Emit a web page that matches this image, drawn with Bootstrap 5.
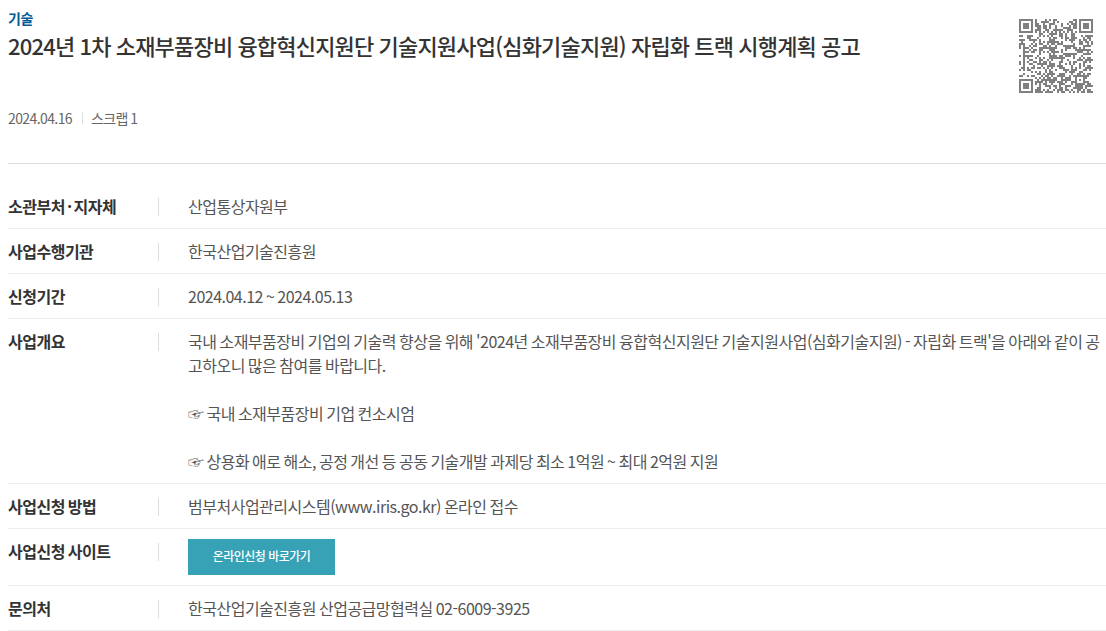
<!DOCTYPE html>
<html lang="ko">
<head>
    <meta charset="UTF-8">
    <title>사업공고</title>
    <link href="https://cdn.jsdelivr.net/npm/bootstrap@5.3.3/dist/css/bootstrap.min.css" rel="stylesheet">
    <style>
        body { font-family: "Noto Sans CJK KR", sans-serif; font-size: 16px; line-height: 24px; letter-spacing: -0.5px; word-spacing: -1px; color: #555; }
        .category { font-size: 14px; line-height: 20px; color: #005b94; }
        .notice-title { font-size: 22px; line-height: 32px; font-weight: 500; letter-spacing: -0.8px; word-spacing: -0.3px; color: #333; margin-top: 1px; }
        .meta { font-size: 14px; line-height: 20px; color: #666; margin-top: 47px; letter-spacing: -0.6px; }
        .meta-bar { width: 1px; height: 12px; background: #ddd; margin: 0 8px 0 10px; }
        .notice-head { height: 164px; border-bottom: 1px solid #ddd; margin-bottom: 20px; }
        .qr { width: 74px; height: 74px; margin: 19px 13px 0 0; }
        .info-row { padding: 10px 0; border-bottom: 1px solid #eee; }
        .info-label { width: 150px; color: #333; }
        .info-label .dot { margin: 0 2px; }
        .info-bar { width: 1px; height: 18px; margin: 4px 29px 0 0; background: #ddd; }
        .info-text { word-break: break-all; }
        .btn-apply { width: 147px; height: 36px; background: #37a1b6; color: #fff; font-size: 12px; font-weight: 500; word-spacing: 0; padding: 0 0 2px; }
        .btn-apply:hover { background: #2f8fa2; color: #fff; }
    </style>
</head>
<body>
<main class="ps-2">
    <header class="notice-head d-flex justify-content-between">
        <div>
            <div class="category fw-bold mt-2">기술</div>
            <h1 class="notice-title mb-0">2024년 1차 소재부품장비 융합혁신지원단 기술지원사업(심화기술지원) 자립화 트랙 시행계획 공고</h1>
            <div class="meta d-flex align-items-center">
                <span>2024.04.16</span><span class="meta-bar"></span><span>스크랩 1</span>
            </div>
        </div>
        <svg class="qr flex-shrink-0" viewBox="0 0 37 37" shape-rendering="crispEdges"><path id="qrPath" fill="#808080"/></svg>
    </header>

    <div class="info-row d-flex">
        <div class="info-label flex-shrink-0 fw-bold">소관부처<span class="dot">·</span>지자체</div>
        <div class="info-bar flex-shrink-0"></div>
        <div class="info-text">산업통상자원부</div>
    </div>
    <div class="info-row d-flex">
        <div class="info-label flex-shrink-0 fw-bold">사업수행기관</div>
        <div class="info-bar flex-shrink-0"></div>
        <div class="info-text">한국산업기술진흥원</div>
    </div>
    <div class="info-row d-flex">
        <div class="info-label flex-shrink-0 fw-bold">신청기간</div>
        <div class="info-bar flex-shrink-0"></div>
        <div class="info-text">2024.04.12 ~ 2024.05.13</div>
    </div>
    <div class="info-row d-flex">
        <div class="info-label flex-shrink-0 fw-bold">사업개요</div>
        <div class="info-bar flex-shrink-0"></div>
        <div class="info-text">국내 소재부품장비 기업의 기술력 향상을 위해 '2024년 소재부품장비 융합혁신지원단 기술지원사업(심화기술지원) - 자립화 트랙'을 아래와 같이 공고하오니 많은 참여를 바랍니다.<br><br>☞ 국내 소재부품장비 기업 컨소시엄<br><br>☞ 상용화 애로 해소, 공정 개선 등 공동 기술개발 과제당 최소 1억원 ~ 최대 2억원 지원</div>
    </div>
    <div class="info-row d-flex">
        <div class="info-label flex-shrink-0 fw-bold">사업신청 방법</div>
        <div class="info-bar flex-shrink-0"></div>
        <div class="info-text">범부처사업관리시스템(www.iris.go.kr) 온라인 접수</div>
    </div>
    <div class="info-row d-flex">
        <div class="info-label flex-shrink-0 fw-bold">사업신청 사이트</div>
        <div class="info-bar flex-shrink-0"></div>
        <a href="#" class="btn btn-apply rounded-0 border-0 d-flex align-items-center justify-content-center">온라인신청 바로가기</a>
    </div>
    <div class="info-row d-flex">
        <div class="info-label flex-shrink-0 fw-bold">문의처</div>
        <div class="info-bar flex-shrink-0"></div>
        <div class="info-text">한국산업기술진흥원 산업공급망협력실 02-6009-3925</div>
    </div>
</main>

<script src="https://cdn.jsdelivr.net/npm/bootstrap@5.3.3/dist/js/bootstrap.bundle.min.js"></script>
<script>
    // QR version 5, error correction L: 108 data + 26 ec codewords in one block
    const SIZE = 37;

    function gfMul(a, b) {
        let r = 0;
        for (let i = 7; i >= 0; i--) {
            r = (r << 1) ^ ((r >>> 7) * 0x11d);
            r ^= ((b >>> i) & 1) * a;
        }
        return r;
    }

    function codewords(text) {
        let bits = '0100' + text.length.toString(2).padStart(8, '0');
        for (const c of text) bits += c.charCodeAt(0).toString(2).padStart(8, '0');
        bits += '0000';
        const data = bits.match(/.{8}/g).map(b => parseInt(b, 2));
        for (let pad = 0xec; data.length < 108; pad ^= 0xec ^ 0x11) data.push(pad);

        const gen = new Array(26).fill(0);
        gen[25] = 1;
        let root = 1;
        for (let i = 0; i < 26; i++) {
            for (let j = 0; j < 26; j++) {
                gen[j] = gfMul(gen[j], root) ^ (j < 25 ? gen[j + 1] : 0);
            }
            root = gfMul(root, 2);
        }
        const ec = new Array(26).fill(0);
        data.forEach(b => {
            const f = b ^ ec.shift();
            ec.push(0);
            gen.forEach((g, i) => ec[i] ^= gfMul(g, f));
        });
        return data.concat(ec);
    }

    function qrPath(text) {
        const MASK = 4;
        const masked = (x, y) => (Math.floor(x / 3) + Math.floor(y / 2)) % 2 === 0;
        const m = Array.from({length: SIZE}, () => new Array(SIZE).fill(null));
        const set = (x, y, v) => { if (x >= 0 && y >= 0 && x < SIZE && y < SIZE) m[y][x] = v ? 1 : 0; };

        // timing, finders, alignment
        for (let i = 0; i < SIZE; i++) {
            set(6, i, i % 2 === 0);
            set(i, 6, i % 2 === 0);
        }
        [[3, 3], [SIZE - 4, 3], [3, SIZE - 4]].forEach(([cx, cy]) => {
            for (let dy = -4; dy <= 4; dy++) for (let dx = -4; dx <= 4; dx++) {
                const d = Math.max(Math.abs(dx), Math.abs(dy));
                set(cx + dx, cy + dy, d !== 2 && d !== 4);
            }
        });
        for (let dy = -2; dy <= 2; dy++) for (let dx = -2; dx <= 2; dx++) {
            set(30 + dx, 30 + dy, Math.max(Math.abs(dx), Math.abs(dy)) !== 1);
        }

        // format bits
        const fmt = 8 | MASK;
        let rem = fmt;
        for (let i = 0; i < 10; i++) rem = (rem << 1) ^ ((rem >>> 9) * 0x537);
        const f = ((fmt << 10) | rem) ^ 0x5412;
        const bit = i => (f >>> i) & 1;
        for (let i = 0; i < 6; i++) set(8, i, bit(i));
        set(8, 7, bit(6));
        set(8, 8, bit(7));
        set(7, 8, bit(8));
        for (let i = 9; i < 15; i++) set(14 - i, 8, bit(i));
        for (let i = 0; i < 8; i++) set(SIZE - 1 - i, 8, bit(i));
        for (let i = 8; i < 15; i++) set(8, SIZE - 15 + i, bit(i));
        set(8, SIZE - 8, 1);

        // data, zigzag from the right
        const cw = codewords(text);
        let n = 0;
        for (let right = SIZE - 1; right >= 1; right -= 2) {
            if (right === 6) right = 5;
            for (let v = 0; v < SIZE; v++) for (let j = 0; j < 2; j++) {
                const x = right - j;
                const y = ((right + 1) & 2) === 0 ? SIZE - 1 - v : v;
                if (m[y][x] !== null) continue;
                const b = n < cw.length * 8 ? (cw[n >> 3] >>> (7 - (n & 7))) & 1 : 0;
                m[y][x] = b ^ (masked(x, y) ? 1 : 0);
                n++;
            }
        }
        return m.map((row, y) => row.map((v, x) => v ? `M${x} ${y}h1v1h-1z` : '').join('')).join('');
    }

    document.getElementById('qrPath').setAttribute('d',
        qrPath('https://www.bizinfo.go.kr/web/lay1/bbs/S1T122C128/AS/74/view.do?pblancId=PBLN_000000000096833'));
</script>
</body>
</html>
